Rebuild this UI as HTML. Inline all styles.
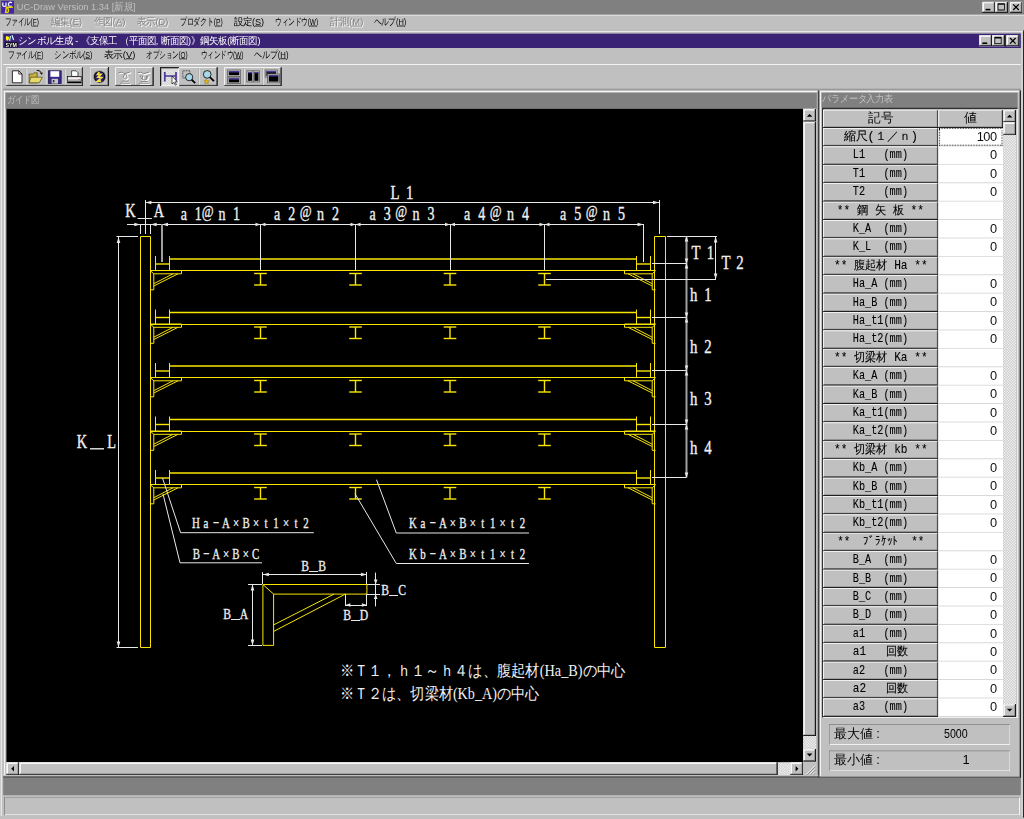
<!DOCTYPE html><html><head><meta charset="utf-8"><style>
*{margin:0;padding:0;box-sizing:border-box}
html,body{width:1024px;height:819px;overflow:hidden;background:#c0c0c0}
#root{position:absolute;left:0;top:0;width:1280px;height:1024px;transform:scale(0.8);transform-origin:0 0;background:#c0c0c0;font-family:"Liberation Sans",sans-serif;font-size:12px;color:#000;overflow:hidden}
.a{position:absolute}
.t{position:absolute;white-space:nowrap;line-height:1;transform-origin:0 0}
.rz{background:#c0c0c0;box-shadow:inset -1px -1px #000,inset 1px 1px #fff,inset -2px -2px #808080}
.rz2{background:#c0c0c0;box-shadow:inset -1px -1px #000,inset 1px 1px #dfdfdf,inset -2px -2px #808080,inset 2px 2px #fff}
.sk{box-shadow:inset 1px 1px #808080,inset -1px -1px #fff}
.sk2{box-shadow:inset 1px 1px #808080,inset -1px -1px #fff,inset 2px 2px #000,inset -2px -2px #dfdfdf}
.dis{color:#808080;text-shadow:1px 1px 0 #fff}
.chk{background-color:#c0c0c0;background-image:linear-gradient(45deg,#fff 25%,transparent 25%,transparent 75%,#fff 75%),linear-gradient(45deg,#fff 25%,transparent 25%,transparent 75%,#fff 75%);background-size:2px 2px;background-position:0 0,1px 1px}
svg{position:absolute;left:0;top:0}
</style></head><body><div id="root"><div class="a " style="left:0px;top:0px;width:1280px;height:17.5px;background:#808080"></div><div class="a " style="left:0px;top:19px;width:1280px;height:1px;background:#e0e0e0"></div><svg width="20" height="18" style="left:0px;top:0px"><rect x="1.5" y="1" width="16" height="16" fill="#4424a8"/><path d="M3.5 3 V6.5 Q3.5 8 5.5 8 Q7.5 8 7.5 6.5 V3" stroke="#e8f4f4" stroke-width="1.6" fill="none"/><path d="M15 3.5 Q13.5 2.5 12 3 Q10 4 10.5 6.5 Q11.5 8.5 15 7.5" stroke="#e8f4f4" stroke-width="1.6" fill="none"/><path d="M7.5 9 H16 M8 9 L7 15.5 H9.5 Q11 15 10.5 12 Q10 10 9 9.5" stroke="#e8d400" stroke-width="1.8" fill="none"/></svg><div class="t fit" style="left:21px;top:3px;color:#c0c0c0;font-size:12px;--w:148;transform:scaleX(0.9673)">UC-Draw Version 1.34 [新規]</div><div class="a rz2" style="left:1228px;top:2px;width:16px;height:14px"><div class="a" style="left:4px;top:9px;width:6px;height:2px;background:#000"></div></div><div class="a rz2" style="left:1244px;top:2px;width:16px;height:14px"><div class="a" style="left:3px;top:2px;width:9px;height:9px;border:1px solid #000;border-top-width:2px"></div></div><div class="a rz2" style="left:1262px;top:2px;width:16px;height:14px"><svg width="16" height="14" style="left:0;top:0"><path d="M4.5 3.5 L11.5 10.5 M11.5 3.5 L4.5 10.5" stroke="#000" stroke-width="1.6"/></svg></div><div class="t fit" style="left:6.4px;top:21px;font-size:12px;--w:42.3;transform:scaleX(0.6714)">ファイル(<u>F</u>)</div><div class="t dis fit" style="left:64px;top:21px;font-size:12px;--w:38.5;transform:scaleX(0.9625)">編集(<u>E</u>)</div><div class="t dis fit" style="left:116.6px;top:21px;font-size:12px;--w:39.8;transform:scaleX(0.9950)">作図(<u>A</u>)</div><div class="t dis fit" style="left:170.5px;top:21px;font-size:12px;--w:39.75;transform:scaleX(0.9695)">表示(<u>D</u>)</div><div class="t fit" style="left:224.75px;top:21px;font-size:12px;--w:53.4;transform:scaleX(0.7026)">プロダクト(<u>P</u>)</div><div class="t fit" style="left:291.9px;top:21px;font-size:12px;--w:38.1;transform:scaleX(0.9525)">設定(<u>S</u>)</div><div class="t fit" style="left:343.75px;top:21px;font-size:12px;--w:53.4;transform:scaleX(0.6759)">ウィンドウ(<u>W</u>)</div><div class="t dis fit" style="left:412.5px;top:21px;font-size:12px;--w:41.1;transform:scaleX(0.9786)">計測(<u>M</u>)</div><div class="t fit" style="left:467.4px;top:21px;font-size:12px;--w:41.1;transform:scaleX(0.7755)">ヘルプ(<u>H</u>)</div><div class="a " style="left:1px;top:38px;width:1px;height:982px;background:#fff"></div><div class="a " style="left:1px;top:39px;width:1279px;height:1px;background:#fff"></div><div class="a " style="left:2px;top:38px;width:1277px;height:1px;background:#b8b8b8"></div><div class="a " style="left:1279px;top:38px;width:1px;height:984px;background:#000"></div><div class="a " style="left:1277px;top:38px;width:1px;height:982px;background:#e8e8e8"></div><div class="a " style="left:4px;top:42px;width:1272px;height:18px;background:#3a2274"></div><svg width="18" height="18" style="left:5px;top:42px"><path d="M3 3 Q1 7 4 9 Q7 8 6 4 Z" fill="#ff0"/><path d="M8 3 L7 9 M10 2 L12 8" stroke="#cff" stroke-width="1.5"/><rect x="1" y="11" width="16" height="6" fill="#000"/><text x="9" y="16.5" font-size="6.5" font-weight="bold" fill="#fff" text-anchor="middle" font-family="Liberation Sans">SYM</text></svg><div class="t fit" style="left:23px;top:45px;color:#fff;font-size:12px;--w:303;transform:scaleX(0.9439)">シンボル生成 - 《支保工 （平面図, 断面図)》鋼矢板(断面図)</div><div class="a rz2" style="left:1224px;top:44px;width:16px;height:14px"><div class="a" style="left:4px;top:9px;width:6px;height:2px;background:#000"></div></div><div class="a rz2" style="left:1240px;top:44px;width:16px;height:14px"><div class="a" style="left:3px;top:2px;width:9px;height:9px;border:1px solid #000;border-top-width:2px"></div></div><div class="a rz2" style="left:1258px;top:44px;width:16px;height:14px"><svg width="16" height="14" style="left:0;top:0"><path d="M4.5 3.5 L11.5 10.5 M11.5 3.5 L4.5 10.5" stroke="#000" stroke-width="1.6"/></svg></div><div class="t fit" style="left:10.25px;top:62px;font-size:12px;--w:44;transform:scaleX(0.6984)">ファイル(<u>F</u>)</div><div class="t fit" style="left:67.75px;top:62px;font-size:12px;--w:47.6;transform:scaleX(0.7438)">シンボル(<u>S</u>)</div><div class="t fit" style="left:130px;top:62px;font-size:12px;--w:39.25;transform:scaleX(0.9812)">表示(<u>V</u>)</div><div class="t fit" style="left:183.1px;top:62px;font-size:12px;--w:51.3;transform:scaleX(0.6662)">オプション(<u>O</u>)</div><div class="t fit" style="left:250.9px;top:62px;font-size:12px;--w:53.1;transform:scaleX(0.6722)">ウィンドウ(<u>W</u>)</div><div class="t fit" style="left:317.9px;top:62px;font-size:12px;--w:42.9;transform:scaleX(0.8094)">ヘルプ(<u>H</u>)</div><div class="a " style="left:4px;top:80px;width:1272px;height:1px;background:#fff"></div><div class="a " style="left:4px;top:111px;width:1272px;height:1px;background:#808080"></div><div class="a rz" style="left:8px;top:84px;width:96px;height:24px"></div><div class="a" style="left:32px;top:86px;width:1px;height:20px;background:#a8a8a8"></div><div class="a" style="left:33px;top:86px;width:1px;height:20px;background:#e8e8e8"></div><div class="a" style="left:56px;top:86px;width:1px;height:20px;background:#a8a8a8"></div><div class="a" style="left:57px;top:86px;width:1px;height:20px;background:#e8e8e8"></div><div class="a" style="left:80px;top:86px;width:1px;height:20px;background:#a8a8a8"></div><div class="a" style="left:81px;top:86px;width:1px;height:20px;background:#e8e8e8"></div><svg width="24" height="24" style="left:8px;top:84px"><path d="M7.5 4.5 H15.5 L19.5 8.5 V19.5 H7.5 Z" fill="#fff" stroke="#000"/><path d="M15.5 4.5 V8.5 H19.5" fill="none" stroke="#000"/></svg><svg width="24" height="24" style="left:32px;top:84px"><path d="M4.5 8.5 H9 L10.5 7 H14.5 V19.5 H4.5 Z" fill="#c8b040" stroke="#404000" stroke-width=".8"/><path d="M6.5 12.5 H21 L17 19.5 H4.5 Z" fill="#e8d870" stroke="#404000" stroke-width=".8"/><path d="M14 4 Q18 3 20 8" stroke="#000" fill="none" stroke-width="1.2"/><path d="M20.5 9.5 L18 7.5 L21.5 6.5 Z" fill="#000"/></svg><svg width="24" height="24" style="left:56px;top:84px"><rect x="4.5" y="4.5" width="16" height="16" fill="#38288a" stroke="#100840" stroke-width=".8"/><rect x="7" y="5" width="11" height="7" fill="#fff"/><rect x="8.5" y="14.5" width="8" height="6" fill="#c8c8c8"/><rect x="10" y="16" width="2" height="3" fill="#303030"/></svg><svg width="24" height="24" style="left:80px;top:84px"><path d="M9.5 4.5 H15 L17.5 7 V11.5 H9.5 Z" fill="#fff" stroke="#000" stroke-width=".8"/><rect x="4.5" y="11.5" width="17" height="6" fill="#c0c0c0" stroke="#000" stroke-width=".8"/><rect x="5" y="13" width="16" height="1.5" fill="#fff"/><rect x="4" y="18.5" width="18" height="1.5" fill="#000"/><circle cx="19" cy="15.5" r=".8" fill="#e04040"/></svg><div class="a rz" style="left:112px;top:84px;width:24px;height:24px"></div><svg width="24" height="24" style="left:112px;top:84px"><circle cx="12.5" cy="12" r="8" fill="#808080"/><circle cx="12.5" cy="12" r="7" fill="#000"/><circle cx="12.5" cy="12" r="6" fill="#2a1e78"/><path d="M12 6 L10 9 L14 9 L10.5 12.5 L15 13 L10 17.5 L14.5 17.5" stroke="#f0e040" stroke-width="2.2" fill="none"/></svg><div class="a rz" style="left:144px;top:84px;width:48px;height:24px"></div><div class="a" style="left:168px;top:86px;width:1px;height:20px;background:#a8a8a8"></div><div class="a" style="left:169px;top:86px;width:1px;height:20px;background:#e8e8e8"></div><svg width="24" height="24" style="left:144px;top:84px"><g transform="translate(1,1)" stroke="#fff" stroke-width="2" fill="none"><path d="M4 7 Q8 5 12 8 L19 6 M12 8 L10 13 L12.5 15 L15 13 L13 8 M8 17.5 H17 M6 20 H19"/></g><g stroke="#808080" stroke-width="1.2" fill="none"><path d="M4 7 Q8 5 12 8 L19 6 M12 8 L10 13 L12.5 15 L15 13 L13 8 M8 17.5 H17 M6 20 H19"/></g></svg><svg width="24" height="24" style="left:168px;top:84px"><g transform="translate(1,1)" stroke="#fff" stroke-width="2" fill="none"><path d="M4 7 Q8 5 12 8 L19 6 M8 10 Q8 16 12.5 16 Q17 16 17 10 M10 11 V15 M15 11 V15 M8 18 H17 M6 20 H19"/></g><g stroke="#808080" stroke-width="1.2" fill="none"><path d="M4 7 Q8 5 12 8 L19 6 M8 10 Q8 16 12.5 16 Q17 16 17 10 M10 11 V15 M15 11 V15 M8 18 H17 M6 20 H19"/></g></svg><div class="a rz" style="left:200px;top:84px;width:72px;height:24px"></div><div class="a" style="left:248px;top:86px;width:1px;height:20px;background:#a8a8a8"></div><div class="a" style="left:249px;top:86px;width:1px;height:20px;background:#e8e8e8"></div><div class="a chk" style="left:200px;top:84px;width:24px;height:24px;box-shadow:inset 1px 1px #000,inset -1px -1px #fff,inset 2px 2px #808080"></div><svg width="24" height="24" style="left:201px;top:84px"><path d="M5 6 V18 M19 6 V18" stroke="#4a3a9a" stroke-width="2.2"/><path d="M5 11 H19" stroke="#4a3a9a" stroke-width="2"/><path d="M14 11 L14 21 L16.2 19 L18.2 22.5 L19.5 21.8 L17.6 18.4 L20.5 18.2 Z" fill="#fff" stroke="#000" stroke-width=".8"/></svg><svg width="24" height="24" style="left:224px;top:84px"><rect x="4.5" y="4.5" width="9" height="9" fill="none" stroke="#000" stroke-dasharray="1 1"/><circle cx="12.5" cy="12.5" r="4.5" fill="#a8d8e8" stroke="#000"/><path d="M15.5 15.5 L20 20" stroke="#000" stroke-width="2.2"/></svg><svg width="24" height="24" style="left:248px;top:84px"><circle cx="11" cy="9" r="4.8" fill="#a8d8e8" stroke="#000"/><path d="M14.3 12.3 L19.5 17.5" stroke="#000" stroke-width="2.2"/><path d="M9.5 15 L11 17 L13.5 17 L11.8 18.5 L12.5 21 L10.2 19.5 L8 21 L8.6 18.5 L7 17 L9 17 Z" fill="#e8c000" stroke="#806000" stroke-width=".5"/></svg><div class="a rz" style="left:280px;top:84px;width:72px;height:24px"></div><div class="a" style="left:304px;top:86px;width:1px;height:20px;background:#a8a8a8"></div><div class="a" style="left:305px;top:86px;width:1px;height:20px;background:#e8e8e8"></div><div class="a" style="left:328px;top:86px;width:1px;height:20px;background:#a8a8a8"></div><div class="a" style="left:329px;top:86px;width:1px;height:20px;background:#e8e8e8"></div><svg width="24" height="24" style="left:280px;top:84px"><rect x="4.5" y="3.5" width="16" height="8" fill="#c0c0c0" stroke="#606060"/><rect x="6" y="5" width="13" height="5" fill="#000"/><rect x="6" y="5" width="13" height="1.5" fill="#5040b0"/><rect x="4.5" y="12.5" width="16" height="8" fill="#c0c0c0" stroke="#606060"/><rect x="6" y="14" width="13" height="5" fill="#000"/><rect x="6" y="14" width="13" height="1.5" fill="#5040b0"/></svg><svg width="24" height="24" style="left:304px;top:84px"><rect x="4.5" y="4.5" width="8" height="14" fill="#c0c0c0" stroke="#606060"/><rect x="6" y="6" width="5" height="11" fill="#000"/><rect x="6" y="6" width="5" height="1.5" fill="#5040b0"/><rect x="12.5" y="4.5" width="8" height="14" fill="#c0c0c0" stroke="#606060"/><rect x="14" y="6" width="5" height="11" fill="#000"/><rect x="14" y="6" width="5" height="1.5" fill="#5040b0"/></svg><svg width="24" height="24" style="left:328px;top:84px"><rect x="3.5" y="3.5" width="15" height="9" fill="#c0c0c0" stroke="#606060"/><rect x="5" y="5" width="12" height="6" fill="#000"/><rect x="5" y="5" width="12" height="1.5" fill="#5040b0"/><rect x="6.5" y="8.5" width="15" height="11" fill="#c0c0c0" stroke="#606060"/><rect x="8" y="10" width="12" height="8" fill="#000"/><rect x="8" y="10" width="12" height="1.5" fill="#5040b0"/></svg><div class="a " style="left:5px;top:114px;width:1017px;height:1px;background:#fff"></div><div class="a " style="left:5px;top:114px;width:1px;height:856px;background:#fff"></div><div class="a " style="left:1022px;top:113px;width:1px;height:858px;background:#808080"></div><div class="a " style="left:1023px;top:113px;width:1px;height:859px;background:#000"></div><div class="a " style="left:7px;top:116px;width:1014px;height:20px;background:#808080"></div><div class="t fit" style="left:9px;top:119px;color:#c0c0c0;font-size:12px;--w:40;transform:scaleX(0.8333)">ガイド図</div><div class="a " style="left:8px;top:136px;width:996px;height:817px;background:#000"></div><div class="a chk" style="left:1004px;top:136px;width:16px;height:817px;"></div><div class="a rz2" style="left:1004px;top:136px;width:16px;height:16px"><svg width="16" height="16"><path d="M4.5 10 L8 6.5 L11.5 10 Z" fill="#000"/></svg></div><div class="a rz2" style="left:1004px;top:152px;width:16px;height:768px;"></div><div class="a rz2" style="left:1004px;top:936px;width:16px;height:16px"><svg width="16" height="16"><path d="M4.5 6 L8 9.5 L11.5 6 Z" fill="#000"/></svg></div><div class="a chk" style="left:8px;top:953px;width:996px;height:16px;"></div><div class="a rz2" style="left:8px;top:953px;width:16px;height:16px"><svg width="16" height="16"><path d="M9.5 4.5 L6 8 L9.5 11.5 Z" fill="#000"/></svg></div><div class="a rz2" style="left:24px;top:953px;width:948px;height:16px;"></div><div class="a rz2" style="left:988px;top:953px;width:16px;height:16px"><svg width="16" height="16"><path d="M6.5 4.5 L10 8 L6.5 11.5 Z" fill="#000"/></svg></div><div class="a " style="left:1004px;top:953px;width:16px;height:16px;background:#c0c0c0"></div><svg width="16" height="16" style="left:1004px;top:953px"><path d="M15 4 L4 15 M15 8 L8 15 M15 12 L12 15" stroke="#fff" stroke-width="1"/><path d="M15.5 5 L5 15.5 M15.5 9 L9 15.5 M15.5 13 L13 15.5" stroke="#808080" stroke-width="1"/></svg><div class="a " style="left:5px;top:969px;width:1018px;height:1px;background:#c0c0c0"></div><div class="a " style="left:4px;top:970px;width:1019px;height:1px;background:#808080"></div><div class="a " style="left:4px;top:971px;width:1272px;height:1px;background:#000"></div><div class="a " style="left:1025px;top:114px;width:250px;height:1px;background:#fff"></div><div class="a " style="left:1025px;top:114px;width:1px;height:856px;background:#fff"></div><div class="a " style="left:1274px;top:113px;width:1px;height:858px;background:#808080"></div><div class="a " style="left:1275px;top:113px;width:1px;height:859px;background:#000"></div><div class="a " style="left:1027px;top:116px;width:245px;height:18px;background:#808080"></div><div class="t fit" style="left:1028px;top:118px;color:#c0c0c0;font-size:12px;--w:88;transform:scaleX(0.9167)">パラメータ入力表</div><div class="a sk2" style="left:1027px;top:134px;width:246px;height:764px;background:#c0c0c0"></div><div class="a rz" style="left:1029px;top:137px;width:144px;height:23px"></div><div class="t " style="left:1029px;top:140px;width:144px;text-align:center;font-size:16px"><span class="fit" style="display:inline-block;--w:31;transform:scaleX(0.9688)">記号</span></div><div class="a rz" style="left:1173px;top:137px;width:81px;height:23px"></div><div class="t " style="left:1173px;top:140px;width:81px;text-align:center;font-size:16px"><span class="fit" style="display:inline-block;--w:16;transform:scaleX(1.0000)">値</span></div><div class="a" style="left:1029px;top:160px;width:144px;height:23px;background:#c0c0c0;box-shadow:inset -1px -1px #000,inset 1px 1px #fff,inset -2px -2px #808080"></div><div class="t " style="left:1029px;top:164px;width:144px;text-align:center;font-size:15px;font-family:Liberation Mono,monospace;color:#000;-webkit-text-stroke:0.12px #000"><span class="fit" style="display:inline-block;transform-origin:50% 0;--w:93;transform:scaleX(1.0000)">縮尺(１／ｎ)</span></div><div class="a" style="left:1173px;top:160px;width:81px;height:23px;background:#fff;border-bottom:1px solid #d0d0d0"></div><div class="t " style="left:1173px;top:163px;width:73px;text-align:right;font-size:16px;color:#101010;letter-spacing:-0.5px">100</div><div class="a" style="left:1029px;top:183px;width:144px;height:23px;background:#c0c0c0;box-shadow:inset -1px -1px #000,inset 1px 1px #fff,inset -2px -2px #808080"></div><div class="t " style="left:1029px;top:187px;width:144px;text-align:center;font-size:15px;font-family:Liberation Mono,monospace;color:#000;-webkit-text-stroke:0.12px #000"><span class="fit" style="display:inline-block;transform-origin:50% 0;--w:69;transform:scaleX(0.8519)">L1&nbsp;&nbsp;&nbsp;(mm)</span></div><div class="a" style="left:1173px;top:183px;width:81px;height:23px;background:#fff;border-bottom:1px solid #d0d0d0"></div><div class="t " style="left:1173px;top:186px;width:73px;text-align:right;font-size:16px;color:#101010;letter-spacing:-0.5px">0</div><div class="a" style="left:1029px;top:206px;width:144px;height:23px;background:#c0c0c0;box-shadow:inset -1px -1px #000,inset 1px 1px #fff,inset -2px -2px #808080"></div><div class="t " style="left:1029px;top:210px;width:144px;text-align:center;font-size:15px;font-family:Liberation Mono,monospace;color:#000;-webkit-text-stroke:0.12px #000"><span class="fit" style="display:inline-block;transform-origin:50% 0;--w:69;transform:scaleX(0.8519)">T1&nbsp;&nbsp;&nbsp;(mm)</span></div><div class="a" style="left:1173px;top:206px;width:81px;height:23px;background:#fff;border-bottom:1px solid #d0d0d0"></div><div class="t " style="left:1173px;top:209px;width:73px;text-align:right;font-size:16px;color:#101010;letter-spacing:-0.5px">0</div><div class="a" style="left:1029px;top:229px;width:144px;height:23px;background:#c0c0c0;box-shadow:inset -1px -1px #000,inset 1px 1px #fff,inset -2px -2px #808080"></div><div class="t " style="left:1029px;top:233px;width:144px;text-align:center;font-size:15px;font-family:Liberation Mono,monospace;color:#000;-webkit-text-stroke:0.12px #000"><span class="fit" style="display:inline-block;transform-origin:50% 0;--w:69;transform:scaleX(0.8519)">T2&nbsp;&nbsp;&nbsp;(mm)</span></div><div class="a" style="left:1173px;top:229px;width:81px;height:23px;background:#fff;border-bottom:1px solid #d0d0d0"></div><div class="t " style="left:1173px;top:232px;width:73px;text-align:right;font-size:16px;color:#101010;letter-spacing:-0.5px">0</div><div class="a" style="left:1029px;top:252px;width:144px;height:23px;background:#c0c0c0;box-shadow:inset -1px -1px #000,inset 1px 1px #fff,inset -2px -2px #808080"></div><div class="t " style="left:1029px;top:256px;width:144px;text-align:center;font-size:15px;font-family:Liberation Mono,monospace;color:#000;-webkit-text-stroke:0.12px #000"><span class="fit" style="display:inline-block;transform-origin:50% 0;--w:109;transform:scaleX(0.9316)">**&nbsp;鋼&nbsp;矢&nbsp;板&nbsp;**</span></div><div class="a" style="left:1173px;top:252px;width:81px;height:23px;background:#fff;border-bottom:1px solid #d0d0d0"></div><div class="a" style="left:1029px;top:275px;width:144px;height:23px;background:#c0c0c0;box-shadow:inset -1px -1px #000,inset 1px 1px #fff,inset -2px -2px #808080"></div><div class="t " style="left:1029px;top:279px;width:144px;text-align:center;font-size:15px;font-family:Liberation Mono,monospace;color:#000;-webkit-text-stroke:0.12px #000"><span class="fit" style="display:inline-block;transform-origin:50% 0;--w:69;transform:scaleX(0.8519)">K_A&nbsp;&nbsp;(mm)</span></div><div class="a" style="left:1173px;top:275px;width:81px;height:23px;background:#fff;border-bottom:1px solid #d0d0d0"></div><div class="t " style="left:1173px;top:278px;width:73px;text-align:right;font-size:16px;color:#101010;letter-spacing:-0.5px">0</div><div class="a" style="left:1029px;top:298px;width:144px;height:23px;background:#c0c0c0;box-shadow:inset -1px -1px #000,inset 1px 1px #fff,inset -2px -2px #808080"></div><div class="t " style="left:1029px;top:302px;width:144px;text-align:center;font-size:15px;font-family:Liberation Mono,monospace;color:#000;-webkit-text-stroke:0.12px #000"><span class="fit" style="display:inline-block;transform-origin:50% 0;--w:69;transform:scaleX(0.8519)">K_L&nbsp;&nbsp;(mm)</span></div><div class="a" style="left:1173px;top:298px;width:81px;height:23px;background:#fff;border-bottom:1px solid #d0d0d0"></div><div class="t " style="left:1173px;top:301px;width:73px;text-align:right;font-size:16px;color:#101010;letter-spacing:-0.5px">0</div><div class="a" style="left:1029px;top:321px;width:144px;height:23px;background:#c0c0c0;box-shadow:inset -1px -1px #000,inset 1px 1px #fff,inset -2px -2px #808080"></div><div class="t " style="left:1029px;top:325px;width:144px;text-align:center;font-size:15px;font-family:Liberation Mono,monospace;color:#000;-webkit-text-stroke:0.12px #000"><span class="fit" style="display:inline-block;transform-origin:50% 0;--w:117;transform:scaleX(0.9286)">**&nbsp;腹起材&nbsp;Ha&nbsp;**</span></div><div class="a" style="left:1173px;top:321px;width:81px;height:23px;background:#fff;border-bottom:1px solid #d0d0d0"></div><div class="a" style="left:1029px;top:344px;width:144px;height:23px;background:#c0c0c0;box-shadow:inset -1px -1px #000,inset 1px 1px #fff,inset -2px -2px #808080"></div><div class="t " style="left:1029px;top:348px;width:144px;text-align:center;font-size:15px;font-family:Liberation Mono,monospace;color:#000;-webkit-text-stroke:0.12px #000"><span class="fit" style="display:inline-block;transform-origin:50% 0;--w:69;transform:scaleX(0.8519)">Ha_A&nbsp;(mm)</span></div><div class="a" style="left:1173px;top:344px;width:81px;height:23px;background:#fff;border-bottom:1px solid #d0d0d0"></div><div class="t " style="left:1173px;top:347px;width:73px;text-align:right;font-size:16px;color:#101010;letter-spacing:-0.5px">0</div><div class="a" style="left:1029px;top:367px;width:144px;height:23px;background:#c0c0c0;box-shadow:inset -1px -1px #000,inset 1px 1px #fff,inset -2px -2px #808080"></div><div class="t " style="left:1029px;top:371px;width:144px;text-align:center;font-size:15px;font-family:Liberation Mono,monospace;color:#000;-webkit-text-stroke:0.12px #000"><span class="fit" style="display:inline-block;transform-origin:50% 0;--w:69;transform:scaleX(0.8519)">Ha_B&nbsp;(mm)</span></div><div class="a" style="left:1173px;top:367px;width:81px;height:23px;background:#fff;border-bottom:1px solid #d0d0d0"></div><div class="t " style="left:1173px;top:370px;width:73px;text-align:right;font-size:16px;color:#101010;letter-spacing:-0.5px">0</div><div class="a" style="left:1029px;top:390px;width:144px;height:23px;background:#c0c0c0;box-shadow:inset -1px -1px #000,inset 1px 1px #fff,inset -2px -2px #808080"></div><div class="t " style="left:1029px;top:394px;width:144px;text-align:center;font-size:15px;font-family:Liberation Mono,monospace;color:#000;-webkit-text-stroke:0.12px #000"><span class="fit" style="display:inline-block;transform-origin:50% 0;--w:69;transform:scaleX(0.8519)">Ha_t1(mm)</span></div><div class="a" style="left:1173px;top:390px;width:81px;height:23px;background:#fff;border-bottom:1px solid #d0d0d0"></div><div class="t " style="left:1173px;top:393px;width:73px;text-align:right;font-size:16px;color:#101010;letter-spacing:-0.5px">0</div><div class="a" style="left:1029px;top:413px;width:144px;height:23px;background:#c0c0c0;box-shadow:inset -1px -1px #000,inset 1px 1px #fff,inset -2px -2px #808080"></div><div class="t " style="left:1029px;top:417px;width:144px;text-align:center;font-size:15px;font-family:Liberation Mono,monospace;color:#000;-webkit-text-stroke:0.12px #000"><span class="fit" style="display:inline-block;transform-origin:50% 0;--w:69;transform:scaleX(0.8519)">Ha_t2(mm)</span></div><div class="a" style="left:1173px;top:413px;width:81px;height:23px;background:#fff;border-bottom:1px solid #d0d0d0"></div><div class="t " style="left:1173px;top:416px;width:73px;text-align:right;font-size:16px;color:#101010;letter-spacing:-0.5px">0</div><div class="a" style="left:1029px;top:436px;width:144px;height:23px;background:#c0c0c0;box-shadow:inset -1px -1px #000,inset 1px 1px #fff,inset -2px -2px #808080"></div><div class="t " style="left:1029px;top:440px;width:144px;text-align:center;font-size:15px;font-family:Liberation Mono,monospace;color:#000;-webkit-text-stroke:0.12px #000"><span class="fit" style="display:inline-block;transform-origin:50% 0;--w:117;transform:scaleX(0.9286)">**&nbsp;切梁材&nbsp;Ka&nbsp;**</span></div><div class="a" style="left:1173px;top:436px;width:81px;height:23px;background:#fff;border-bottom:1px solid #d0d0d0"></div><div class="a" style="left:1029px;top:459px;width:144px;height:23px;background:#c0c0c0;box-shadow:inset -1px -1px #000,inset 1px 1px #fff,inset -2px -2px #808080"></div><div class="t " style="left:1029px;top:463px;width:144px;text-align:center;font-size:15px;font-family:Liberation Mono,monospace;color:#000;-webkit-text-stroke:0.12px #000"><span class="fit" style="display:inline-block;transform-origin:50% 0;--w:69;transform:scaleX(0.8519)">Ka_A&nbsp;(mm)</span></div><div class="a" style="left:1173px;top:459px;width:81px;height:23px;background:#fff;border-bottom:1px solid #d0d0d0"></div><div class="t " style="left:1173px;top:462px;width:73px;text-align:right;font-size:16px;color:#101010;letter-spacing:-0.5px">0</div><div class="a" style="left:1029px;top:482px;width:144px;height:23px;background:#c0c0c0;box-shadow:inset -1px -1px #000,inset 1px 1px #fff,inset -2px -2px #808080"></div><div class="t " style="left:1029px;top:486px;width:144px;text-align:center;font-size:15px;font-family:Liberation Mono,monospace;color:#000;-webkit-text-stroke:0.12px #000"><span class="fit" style="display:inline-block;transform-origin:50% 0;--w:69;transform:scaleX(0.8519)">Ka_B&nbsp;(mm)</span></div><div class="a" style="left:1173px;top:482px;width:81px;height:23px;background:#fff;border-bottom:1px solid #d0d0d0"></div><div class="t " style="left:1173px;top:485px;width:73px;text-align:right;font-size:16px;color:#101010;letter-spacing:-0.5px">0</div><div class="a" style="left:1029px;top:505px;width:144px;height:23px;background:#c0c0c0;box-shadow:inset -1px -1px #000,inset 1px 1px #fff,inset -2px -2px #808080"></div><div class="t " style="left:1029px;top:509px;width:144px;text-align:center;font-size:15px;font-family:Liberation Mono,monospace;color:#000;-webkit-text-stroke:0.12px #000"><span class="fit" style="display:inline-block;transform-origin:50% 0;--w:69;transform:scaleX(0.8519)">Ka_t1(mm)</span></div><div class="a" style="left:1173px;top:505px;width:81px;height:23px;background:#fff;border-bottom:1px solid #d0d0d0"></div><div class="t " style="left:1173px;top:508px;width:73px;text-align:right;font-size:16px;color:#101010;letter-spacing:-0.5px">0</div><div class="a" style="left:1029px;top:528px;width:144px;height:23px;background:#c0c0c0;box-shadow:inset -1px -1px #000,inset 1px 1px #fff,inset -2px -2px #808080"></div><div class="t " style="left:1029px;top:532px;width:144px;text-align:center;font-size:15px;font-family:Liberation Mono,monospace;color:#000;-webkit-text-stroke:0.12px #000"><span class="fit" style="display:inline-block;transform-origin:50% 0;--w:69;transform:scaleX(0.8519)">Ka_t2(mm)</span></div><div class="a" style="left:1173px;top:528px;width:81px;height:23px;background:#fff;border-bottom:1px solid #d0d0d0"></div><div class="t " style="left:1173px;top:531px;width:73px;text-align:right;font-size:16px;color:#101010;letter-spacing:-0.5px">0</div><div class="a" style="left:1029px;top:551px;width:144px;height:23px;background:#c0c0c0;box-shadow:inset -1px -1px #000,inset 1px 1px #fff,inset -2px -2px #808080"></div><div class="t " style="left:1029px;top:555px;width:144px;text-align:center;font-size:15px;font-family:Liberation Mono,monospace;color:#000;-webkit-text-stroke:0.12px #000"><span class="fit" style="display:inline-block;transform-origin:50% 0;--w:117;transform:scaleX(0.9286)">**&nbsp;切梁材&nbsp;kb&nbsp;**</span></div><div class="a" style="left:1173px;top:551px;width:81px;height:23px;background:#fff;border-bottom:1px solid #d0d0d0"></div><div class="a" style="left:1029px;top:574px;width:144px;height:23px;background:#c0c0c0;box-shadow:inset -1px -1px #000,inset 1px 1px #fff,inset -2px -2px #808080"></div><div class="t " style="left:1029px;top:578px;width:144px;text-align:center;font-size:15px;font-family:Liberation Mono,monospace;color:#000;-webkit-text-stroke:0.12px #000"><span class="fit" style="display:inline-block;transform-origin:50% 0;--w:69;transform:scaleX(0.8519)">Kb_A&nbsp;(mm)</span></div><div class="a" style="left:1173px;top:574px;width:81px;height:23px;background:#fff;border-bottom:1px solid #d0d0d0"></div><div class="t " style="left:1173px;top:577px;width:73px;text-align:right;font-size:16px;color:#101010;letter-spacing:-0.5px">0</div><div class="a" style="left:1029px;top:597px;width:144px;height:23px;background:#c0c0c0;box-shadow:inset -1px -1px #000,inset 1px 1px #fff,inset -2px -2px #808080"></div><div class="t " style="left:1029px;top:601px;width:144px;text-align:center;font-size:15px;font-family:Liberation Mono,monospace;color:#000;-webkit-text-stroke:0.12px #000"><span class="fit" style="display:inline-block;transform-origin:50% 0;--w:69;transform:scaleX(0.8519)">Kb_B&nbsp;(mm)</span></div><div class="a" style="left:1173px;top:597px;width:81px;height:23px;background:#fff;border-bottom:1px solid #d0d0d0"></div><div class="t " style="left:1173px;top:600px;width:73px;text-align:right;font-size:16px;color:#101010;letter-spacing:-0.5px">0</div><div class="a" style="left:1029px;top:620px;width:144px;height:23px;background:#c0c0c0;box-shadow:inset -1px -1px #000,inset 1px 1px #fff,inset -2px -2px #808080"></div><div class="t " style="left:1029px;top:624px;width:144px;text-align:center;font-size:15px;font-family:Liberation Mono,monospace;color:#000;-webkit-text-stroke:0.12px #000"><span class="fit" style="display:inline-block;transform-origin:50% 0;--w:69;transform:scaleX(0.8519)">Kb_t1(mm)</span></div><div class="a" style="left:1173px;top:620px;width:81px;height:23px;background:#fff;border-bottom:1px solid #d0d0d0"></div><div class="t " style="left:1173px;top:623px;width:73px;text-align:right;font-size:16px;color:#101010;letter-spacing:-0.5px">0</div><div class="a" style="left:1029px;top:643px;width:144px;height:23px;background:#c0c0c0;box-shadow:inset -1px -1px #000,inset 1px 1px #fff,inset -2px -2px #808080"></div><div class="t " style="left:1029px;top:647px;width:144px;text-align:center;font-size:15px;font-family:Liberation Mono,monospace;color:#000;-webkit-text-stroke:0.12px #000"><span class="fit" style="display:inline-block;transform-origin:50% 0;--w:69;transform:scaleX(0.8519)">Kb_t2(mm)</span></div><div class="a" style="left:1173px;top:643px;width:81px;height:23px;background:#fff;border-bottom:1px solid #d0d0d0"></div><div class="t " style="left:1173px;top:646px;width:73px;text-align:right;font-size:16px;color:#101010;letter-spacing:-0.5px">0</div><div class="a" style="left:1029px;top:666px;width:144px;height:23px;background:#c0c0c0;box-shadow:inset -1px -1px #000,inset 1px 1px #fff,inset -2px -2px #808080"></div><div class="t " style="left:1029px;top:670px;width:144px;text-align:center;font-size:15px;font-family:Liberation Mono,monospace;color:#000;-webkit-text-stroke:0.12px #000"><span class="fit" style="display:inline-block;transform-origin:50% 0;--w:109;transform:scaleX(0.9083)">**&nbsp;&nbsp;ﾌﾞﾗｹｯﾄ&nbsp;&nbsp;**</span></div><div class="a" style="left:1173px;top:666px;width:81px;height:23px;background:#fff;border-bottom:1px solid #d0d0d0"></div><div class="a" style="left:1029px;top:689px;width:144px;height:23px;background:#c0c0c0;box-shadow:inset -1px -1px #000,inset 1px 1px #fff,inset -2px -2px #808080"></div><div class="t " style="left:1029px;top:693px;width:144px;text-align:center;font-size:15px;font-family:Liberation Mono,monospace;color:#000;-webkit-text-stroke:0.12px #000"><span class="fit" style="display:inline-block;transform-origin:50% 0;--w:69;transform:scaleX(0.8519)">B_A&nbsp;&nbsp;(mm)</span></div><div class="a" style="left:1173px;top:689px;width:81px;height:23px;background:#fff;border-bottom:1px solid #d0d0d0"></div><div class="t " style="left:1173px;top:692px;width:73px;text-align:right;font-size:16px;color:#101010;letter-spacing:-0.5px">0</div><div class="a" style="left:1029px;top:712px;width:144px;height:23px;background:#c0c0c0;box-shadow:inset -1px -1px #000,inset 1px 1px #fff,inset -2px -2px #808080"></div><div class="t " style="left:1029px;top:716px;width:144px;text-align:center;font-size:15px;font-family:Liberation Mono,monospace;color:#000;-webkit-text-stroke:0.12px #000"><span class="fit" style="display:inline-block;transform-origin:50% 0;--w:69;transform:scaleX(0.8519)">B_B&nbsp;&nbsp;(mm)</span></div><div class="a" style="left:1173px;top:712px;width:81px;height:23px;background:#fff;border-bottom:1px solid #d0d0d0"></div><div class="t " style="left:1173px;top:715px;width:73px;text-align:right;font-size:16px;color:#101010;letter-spacing:-0.5px">0</div><div class="a" style="left:1029px;top:735px;width:144px;height:23px;background:#c0c0c0;box-shadow:inset -1px -1px #000,inset 1px 1px #fff,inset -2px -2px #808080"></div><div class="t " style="left:1029px;top:739px;width:144px;text-align:center;font-size:15px;font-family:Liberation Mono,monospace;color:#000;-webkit-text-stroke:0.12px #000"><span class="fit" style="display:inline-block;transform-origin:50% 0;--w:69;transform:scaleX(0.8519)">B_C&nbsp;&nbsp;(mm)</span></div><div class="a" style="left:1173px;top:735px;width:81px;height:23px;background:#fff;border-bottom:1px solid #d0d0d0"></div><div class="t " style="left:1173px;top:738px;width:73px;text-align:right;font-size:16px;color:#101010;letter-spacing:-0.5px">0</div><div class="a" style="left:1029px;top:758px;width:144px;height:23px;background:#c0c0c0;box-shadow:inset -1px -1px #000,inset 1px 1px #fff,inset -2px -2px #808080"></div><div class="t " style="left:1029px;top:762px;width:144px;text-align:center;font-size:15px;font-family:Liberation Mono,monospace;color:#000;-webkit-text-stroke:0.12px #000"><span class="fit" style="display:inline-block;transform-origin:50% 0;--w:69;transform:scaleX(0.8519)">B_D&nbsp;&nbsp;(mm)</span></div><div class="a" style="left:1173px;top:758px;width:81px;height:23px;background:#fff;border-bottom:1px solid #d0d0d0"></div><div class="t " style="left:1173px;top:761px;width:73px;text-align:right;font-size:16px;color:#101010;letter-spacing:-0.5px">0</div><div class="a" style="left:1029px;top:781px;width:144px;height:23px;background:#c0c0c0;box-shadow:inset -1px -1px #000,inset 1px 1px #fff,inset -2px -2px #808080"></div><div class="t " style="left:1029px;top:785px;width:144px;text-align:center;font-size:15px;font-family:Liberation Mono,monospace;color:#000;-webkit-text-stroke:0.12px #000"><span class="fit" style="display:inline-block;transform-origin:50% 0;--w:69;transform:scaleX(0.8519)">a1&nbsp;&nbsp;&nbsp;(mm)</span></div><div class="a" style="left:1173px;top:781px;width:81px;height:23px;background:#fff;border-bottom:1px solid #d0d0d0"></div><div class="t " style="left:1173px;top:784px;width:73px;text-align:right;font-size:16px;color:#101010;letter-spacing:-0.5px">0</div><div class="a" style="left:1029px;top:804px;width:144px;height:23px;background:#c0c0c0;box-shadow:inset -1px -1px #000,inset 1px 1px #fff,inset -2px -2px #808080"></div><div class="t " style="left:1029px;top:808px;width:144px;text-align:center;font-size:15px;font-family:Liberation Mono,monospace;color:#000;-webkit-text-stroke:0.12px #000"><span class="fit" style="display:inline-block;transform-origin:50% 0;--w:69;transform:scaleX(0.9200)">a1&nbsp;&nbsp;&nbsp;回数</span></div><div class="a" style="left:1173px;top:804px;width:81px;height:23px;background:#fff;border-bottom:1px solid #d0d0d0"></div><div class="t " style="left:1173px;top:807px;width:73px;text-align:right;font-size:16px;color:#101010;letter-spacing:-0.5px">0</div><div class="a" style="left:1029px;top:827px;width:144px;height:23px;background:#c0c0c0;box-shadow:inset -1px -1px #000,inset 1px 1px #fff,inset -2px -2px #808080"></div><div class="t " style="left:1029px;top:831px;width:144px;text-align:center;font-size:15px;font-family:Liberation Mono,monospace;color:#000;-webkit-text-stroke:0.12px #000"><span class="fit" style="display:inline-block;transform-origin:50% 0;--w:69;transform:scaleX(0.8519)">a2&nbsp;&nbsp;&nbsp;(mm)</span></div><div class="a" style="left:1173px;top:827px;width:81px;height:23px;background:#fff;border-bottom:1px solid #d0d0d0"></div><div class="t " style="left:1173px;top:830px;width:73px;text-align:right;font-size:16px;color:#101010;letter-spacing:-0.5px">0</div><div class="a" style="left:1029px;top:850px;width:144px;height:23px;background:#c0c0c0;box-shadow:inset -1px -1px #000,inset 1px 1px #fff,inset -2px -2px #808080"></div><div class="t " style="left:1029px;top:854px;width:144px;text-align:center;font-size:15px;font-family:Liberation Mono,monospace;color:#000;-webkit-text-stroke:0.12px #000"><span class="fit" style="display:inline-block;transform-origin:50% 0;--w:69;transform:scaleX(0.9200)">a2&nbsp;&nbsp;&nbsp;回数</span></div><div class="a" style="left:1173px;top:850px;width:81px;height:23px;background:#fff;border-bottom:1px solid #d0d0d0"></div><div class="t " style="left:1173px;top:853px;width:73px;text-align:right;font-size:16px;color:#101010;letter-spacing:-0.5px">0</div><div class="a" style="left:1029px;top:873px;width:144px;height:23px;background:#c0c0c0;box-shadow:inset -1px -1px #000,inset 1px 1px #fff,inset -2px -2px #808080"></div><div class="t " style="left:1029px;top:877px;width:144px;text-align:center;font-size:15px;font-family:Liberation Mono,monospace;color:#000;-webkit-text-stroke:0.12px #000"><span class="fit" style="display:inline-block;transform-origin:50% 0;--w:69;transform:scaleX(0.8519)">a3&nbsp;&nbsp;&nbsp;(mm)</span></div><div class="a" style="left:1173px;top:873px;width:81px;height:23px;background:#fff;border-bottom:1px solid #d0d0d0"></div><div class="t " style="left:1173px;top:876px;width:73px;text-align:right;font-size:16px;color:#101010;letter-spacing:-0.5px">0</div><div class="a" style="left:1174px;top:160px;width:79px;height:22px;border:1px dotted #000"></div><div class="a chk" style="left:1254px;top:137px;width:16px;height:759px;"></div><div class="a rz2" style="left:1254px;top:137px;width:16px;height:16px"><svg width="16" height="16"><path d="M4.5 10 L8 6.5 L11.5 10 Z" fill="#000"/></svg></div><div class="a rz2" style="left:1254px;top:153px;width:16px;height:16px;"></div><div class="a rz2" style="left:1254px;top:880px;width:16px;height:16px"><svg width="16" height="16"><path d="M4.5 6 L8 9.5 L11.5 6 Z" fill="#000"/></svg></div><div class="a sk" style="left:1036px;top:905px;width:227px;height:26px;"></div><div class="t fit" style="left:1043px;top:909px;font-size:16px;--w:57;transform:scaleX(1.0000)">最大値 :</div><div class="t fit" style="left:1180px;top:909px;font-size:16px;--w:30;transform:scaleX(0.8333)">5000</div><div class="a sk" style="left:1036px;top:938px;width:227px;height:26px;"></div><div class="t fit" style="left:1043px;top:942px;font-size:16px;--w:57;transform:scaleX(1.0000)">最小値 :</div><div class="t " style="left:1203px;top:942px;font-size:16px">1</div><div class="a " style="left:4px;top:972px;width:1272px;height:22px;background:#808080"></div><div class="a sk" style="left:5px;top:996px;width:1270px;height:23px;"></div></div><svg width="1024" height="819" id="dw"><g font-family="Liberation Serif" shape-rendering="auto"><polygon points="140.5,236.5 150.5,236.5 150.5,647.5 140.5,647.5" fill="none" stroke="#f8e600" stroke-width="1"/><polygon points="654.5,236.5 665.5,236.5 665.5,647.5 654.5,647.5" fill="none" stroke="#f8e600" stroke-width="1"/><line x1="169" y1="259" x2="636.5" y2="259" stroke="#f8e600" stroke-width="1.6"/><line x1="150.5" y1="270.5" x2="654.5" y2="270.5" stroke="#f8e600" stroke-width="1"/><line x1="254.2" y1="273.5" x2="266.8" y2="273.5" stroke="#f8e600" stroke-width="1.4"/><line x1="254.2" y1="285.0" x2="266.8" y2="285.0" stroke="#f8e600" stroke-width="1.4"/><line x1="260.5" y1="273.5" x2="260.5" y2="285.0" stroke="#f8e600" stroke-width="1.4"/><line x1="349.2" y1="273.5" x2="361.8" y2="273.5" stroke="#f8e600" stroke-width="1.4"/><line x1="349.2" y1="285.0" x2="361.8" y2="285.0" stroke="#f8e600" stroke-width="1.4"/><line x1="355.5" y1="273.5" x2="355.5" y2="285.0" stroke="#f8e600" stroke-width="1.4"/><line x1="443.7" y1="273.5" x2="456.3" y2="273.5" stroke="#f8e600" stroke-width="1.4"/><line x1="443.7" y1="285.0" x2="456.3" y2="285.0" stroke="#f8e600" stroke-width="1.4"/><line x1="450" y1="273.5" x2="450" y2="285.0" stroke="#f8e600" stroke-width="1.4"/><line x1="538.2" y1="273.5" x2="550.8" y2="273.5" stroke="#f8e600" stroke-width="1.4"/><line x1="538.2" y1="285.0" x2="550.8" y2="285.0" stroke="#f8e600" stroke-width="1.4"/><line x1="544.5" y1="273.5" x2="544.5" y2="285.0" stroke="#f8e600" stroke-width="1.4"/><g ><line x1="155.5" y1="256" x2="155.5" y2="270.5" stroke="#f8e600" stroke-width="1"/><line x1="169.5" y1="256" x2="169.5" y2="270.5" stroke="#f8e600" stroke-width="1"/><line x1="155" y1="264" x2="169" y2="264" stroke="#f8e600" stroke-width="1.4"/><polyline points="150.5,270.5 181.5,270.5 181.5,273.8 153.5,273.8" fill="none" stroke="#f8e600" stroke-width="1"/><polyline points="153.8,273.8 153.8,289.8 150.5,289.8" fill="none" stroke="#f8e600" stroke-width="1"/><line x1="173" y1="273.8" x2="153.8" y2="283.7" stroke="#f8e600" stroke-width="1"/><line x1="178" y1="273.8" x2="153.8" y2="286.0" stroke="#f8e600" stroke-width="1"/><line x1="150.5" y1="270.8" x2="153.8" y2="273.8" stroke="#f8e600" stroke-width="1"/></g><g transform="translate(806,0) scale(-1,1)"><line x1="155.5" y1="256" x2="155.5" y2="270.5" stroke="#f8e600" stroke-width="1"/><line x1="169.5" y1="256" x2="169.5" y2="270.5" stroke="#f8e600" stroke-width="1"/><line x1="155" y1="264" x2="169" y2="264" stroke="#f8e600" stroke-width="1.4"/><polyline points="150.5,270.5 181.5,270.5 181.5,273.8 153.5,273.8" fill="none" stroke="#f8e600" stroke-width="1"/><polyline points="153.8,273.8 153.8,289.8 150.5,289.8" fill="none" stroke="#f8e600" stroke-width="1"/><line x1="173" y1="273.8" x2="153.8" y2="283.7" stroke="#f8e600" stroke-width="1"/><line x1="178" y1="273.8" x2="153.8" y2="286.0" stroke="#f8e600" stroke-width="1"/><line x1="150.5" y1="270.8" x2="153.8" y2="273.8" stroke="#f8e600" stroke-width="1"/></g><line x1="169" y1="312.5" x2="636.5" y2="312.5" stroke="#f8e600" stroke-width="1.6"/><line x1="150.5" y1="324.5" x2="654.5" y2="324.5" stroke="#f8e600" stroke-width="1"/><line x1="254.2" y1="327.0" x2="266.8" y2="327.0" stroke="#f8e600" stroke-width="1.4"/><line x1="254.2" y1="338.5" x2="266.8" y2="338.5" stroke="#f8e600" stroke-width="1.4"/><line x1="260.5" y1="327.0" x2="260.5" y2="338.5" stroke="#f8e600" stroke-width="1.4"/><line x1="349.2" y1="327.0" x2="361.8" y2="327.0" stroke="#f8e600" stroke-width="1.4"/><line x1="349.2" y1="338.5" x2="361.8" y2="338.5" stroke="#f8e600" stroke-width="1.4"/><line x1="355.5" y1="327.0" x2="355.5" y2="338.5" stroke="#f8e600" stroke-width="1.4"/><line x1="443.7" y1="327.0" x2="456.3" y2="327.0" stroke="#f8e600" stroke-width="1.4"/><line x1="443.7" y1="338.5" x2="456.3" y2="338.5" stroke="#f8e600" stroke-width="1.4"/><line x1="450" y1="327.0" x2="450" y2="338.5" stroke="#f8e600" stroke-width="1.4"/><line x1="538.2" y1="327.0" x2="550.8" y2="327.0" stroke="#f8e600" stroke-width="1.4"/><line x1="538.2" y1="338.5" x2="550.8" y2="338.5" stroke="#f8e600" stroke-width="1.4"/><line x1="544.5" y1="327.0" x2="544.5" y2="338.5" stroke="#f8e600" stroke-width="1.4"/><g ><line x1="155.5" y1="309.5" x2="155.5" y2="324.0" stroke="#f8e600" stroke-width="1"/><line x1="169.5" y1="309.5" x2="169.5" y2="324.0" stroke="#f8e600" stroke-width="1"/><line x1="155" y1="317.5" x2="169" y2="317.5" stroke="#f8e600" stroke-width="1.4"/><polyline points="150.5,324.0 181.5,324.0 181.5,327.3 153.5,327.3" fill="none" stroke="#f8e600" stroke-width="1"/><polyline points="153.8,327.3 153.8,343.3 150.5,343.3" fill="none" stroke="#f8e600" stroke-width="1"/><line x1="173" y1="327.3" x2="153.8" y2="337.2" stroke="#f8e600" stroke-width="1"/><line x1="178" y1="327.3" x2="153.8" y2="339.5" stroke="#f8e600" stroke-width="1"/><line x1="150.5" y1="324.3" x2="153.8" y2="327.3" stroke="#f8e600" stroke-width="1"/></g><g transform="translate(806,0) scale(-1,1)"><line x1="155.5" y1="309.5" x2="155.5" y2="324.0" stroke="#f8e600" stroke-width="1"/><line x1="169.5" y1="309.5" x2="169.5" y2="324.0" stroke="#f8e600" stroke-width="1"/><line x1="155" y1="317.5" x2="169" y2="317.5" stroke="#f8e600" stroke-width="1.4"/><polyline points="150.5,324.0 181.5,324.0 181.5,327.3 153.5,327.3" fill="none" stroke="#f8e600" stroke-width="1"/><polyline points="153.8,327.3 153.8,343.3 150.5,343.3" fill="none" stroke="#f8e600" stroke-width="1"/><line x1="173" y1="327.3" x2="153.8" y2="337.2" stroke="#f8e600" stroke-width="1"/><line x1="178" y1="327.3" x2="153.8" y2="339.5" stroke="#f8e600" stroke-width="1"/><line x1="150.5" y1="324.3" x2="153.8" y2="327.3" stroke="#f8e600" stroke-width="1"/></g><line x1="169" y1="366" x2="636.5" y2="366" stroke="#f8e600" stroke-width="1.6"/><line x1="150.5" y1="377.5" x2="654.5" y2="377.5" stroke="#f8e600" stroke-width="1"/><line x1="254.2" y1="380.5" x2="266.8" y2="380.5" stroke="#f8e600" stroke-width="1.4"/><line x1="254.2" y1="392.0" x2="266.8" y2="392.0" stroke="#f8e600" stroke-width="1.4"/><line x1="260.5" y1="380.5" x2="260.5" y2="392.0" stroke="#f8e600" stroke-width="1.4"/><line x1="349.2" y1="380.5" x2="361.8" y2="380.5" stroke="#f8e600" stroke-width="1.4"/><line x1="349.2" y1="392.0" x2="361.8" y2="392.0" stroke="#f8e600" stroke-width="1.4"/><line x1="355.5" y1="380.5" x2="355.5" y2="392.0" stroke="#f8e600" stroke-width="1.4"/><line x1="443.7" y1="380.5" x2="456.3" y2="380.5" stroke="#f8e600" stroke-width="1.4"/><line x1="443.7" y1="392.0" x2="456.3" y2="392.0" stroke="#f8e600" stroke-width="1.4"/><line x1="450" y1="380.5" x2="450" y2="392.0" stroke="#f8e600" stroke-width="1.4"/><line x1="538.2" y1="380.5" x2="550.8" y2="380.5" stroke="#f8e600" stroke-width="1.4"/><line x1="538.2" y1="392.0" x2="550.8" y2="392.0" stroke="#f8e600" stroke-width="1.4"/><line x1="544.5" y1="380.5" x2="544.5" y2="392.0" stroke="#f8e600" stroke-width="1.4"/><g ><line x1="155.5" y1="363" x2="155.5" y2="377.5" stroke="#f8e600" stroke-width="1"/><line x1="169.5" y1="363" x2="169.5" y2="377.5" stroke="#f8e600" stroke-width="1"/><line x1="155" y1="371" x2="169" y2="371" stroke="#f8e600" stroke-width="1.4"/><polyline points="150.5,377.5 181.5,377.5 181.5,380.8 153.5,380.8" fill="none" stroke="#f8e600" stroke-width="1"/><polyline points="153.8,380.8 153.8,396.8 150.5,396.8" fill="none" stroke="#f8e600" stroke-width="1"/><line x1="173" y1="380.8" x2="153.8" y2="390.7" stroke="#f8e600" stroke-width="1"/><line x1="178" y1="380.8" x2="153.8" y2="393.0" stroke="#f8e600" stroke-width="1"/><line x1="150.5" y1="377.8" x2="153.8" y2="380.8" stroke="#f8e600" stroke-width="1"/></g><g transform="translate(806,0) scale(-1,1)"><line x1="155.5" y1="363" x2="155.5" y2="377.5" stroke="#f8e600" stroke-width="1"/><line x1="169.5" y1="363" x2="169.5" y2="377.5" stroke="#f8e600" stroke-width="1"/><line x1="155" y1="371" x2="169" y2="371" stroke="#f8e600" stroke-width="1.4"/><polyline points="150.5,377.5 181.5,377.5 181.5,380.8 153.5,380.8" fill="none" stroke="#f8e600" stroke-width="1"/><polyline points="153.8,380.8 153.8,396.8 150.5,396.8" fill="none" stroke="#f8e600" stroke-width="1"/><line x1="173" y1="380.8" x2="153.8" y2="390.7" stroke="#f8e600" stroke-width="1"/><line x1="178" y1="380.8" x2="153.8" y2="393.0" stroke="#f8e600" stroke-width="1"/><line x1="150.5" y1="377.8" x2="153.8" y2="380.8" stroke="#f8e600" stroke-width="1"/></g><line x1="169" y1="419.5" x2="636.5" y2="419.5" stroke="#f8e600" stroke-width="1.6"/><line x1="150.5" y1="431.5" x2="654.5" y2="431.5" stroke="#f8e600" stroke-width="1"/><line x1="254.2" y1="434.0" x2="266.8" y2="434.0" stroke="#f8e600" stroke-width="1.4"/><line x1="254.2" y1="445.5" x2="266.8" y2="445.5" stroke="#f8e600" stroke-width="1.4"/><line x1="260.5" y1="434.0" x2="260.5" y2="445.5" stroke="#f8e600" stroke-width="1.4"/><line x1="349.2" y1="434.0" x2="361.8" y2="434.0" stroke="#f8e600" stroke-width="1.4"/><line x1="349.2" y1="445.5" x2="361.8" y2="445.5" stroke="#f8e600" stroke-width="1.4"/><line x1="355.5" y1="434.0" x2="355.5" y2="445.5" stroke="#f8e600" stroke-width="1.4"/><line x1="443.7" y1="434.0" x2="456.3" y2="434.0" stroke="#f8e600" stroke-width="1.4"/><line x1="443.7" y1="445.5" x2="456.3" y2="445.5" stroke="#f8e600" stroke-width="1.4"/><line x1="450" y1="434.0" x2="450" y2="445.5" stroke="#f8e600" stroke-width="1.4"/><line x1="538.2" y1="434.0" x2="550.8" y2="434.0" stroke="#f8e600" stroke-width="1.4"/><line x1="538.2" y1="445.5" x2="550.8" y2="445.5" stroke="#f8e600" stroke-width="1.4"/><line x1="544.5" y1="434.0" x2="544.5" y2="445.5" stroke="#f8e600" stroke-width="1.4"/><g ><line x1="155.5" y1="416.5" x2="155.5" y2="431.0" stroke="#f8e600" stroke-width="1"/><line x1="169.5" y1="416.5" x2="169.5" y2="431.0" stroke="#f8e600" stroke-width="1"/><line x1="155" y1="424.5" x2="169" y2="424.5" stroke="#f8e600" stroke-width="1.4"/><polyline points="150.5,431.0 181.5,431.0 181.5,434.3 153.5,434.3" fill="none" stroke="#f8e600" stroke-width="1"/><polyline points="153.8,434.3 153.8,450.3 150.5,450.3" fill="none" stroke="#f8e600" stroke-width="1"/><line x1="173" y1="434.3" x2="153.8" y2="444.2" stroke="#f8e600" stroke-width="1"/><line x1="178" y1="434.3" x2="153.8" y2="446.5" stroke="#f8e600" stroke-width="1"/><line x1="150.5" y1="431.3" x2="153.8" y2="434.3" stroke="#f8e600" stroke-width="1"/></g><g transform="translate(806,0) scale(-1,1)"><line x1="155.5" y1="416.5" x2="155.5" y2="431.0" stroke="#f8e600" stroke-width="1"/><line x1="169.5" y1="416.5" x2="169.5" y2="431.0" stroke="#f8e600" stroke-width="1"/><line x1="155" y1="424.5" x2="169" y2="424.5" stroke="#f8e600" stroke-width="1.4"/><polyline points="150.5,431.0 181.5,431.0 181.5,434.3 153.5,434.3" fill="none" stroke="#f8e600" stroke-width="1"/><polyline points="153.8,434.3 153.8,450.3 150.5,450.3" fill="none" stroke="#f8e600" stroke-width="1"/><line x1="173" y1="434.3" x2="153.8" y2="444.2" stroke="#f8e600" stroke-width="1"/><line x1="178" y1="434.3" x2="153.8" y2="446.5" stroke="#f8e600" stroke-width="1"/><line x1="150.5" y1="431.3" x2="153.8" y2="434.3" stroke="#f8e600" stroke-width="1"/></g><line x1="169" y1="473" x2="636.5" y2="473" stroke="#f8e600" stroke-width="1.6"/><line x1="150.5" y1="484.5" x2="654.5" y2="484.5" stroke="#f8e600" stroke-width="1"/><line x1="254.2" y1="487.5" x2="266.8" y2="487.5" stroke="#f8e600" stroke-width="1.4"/><line x1="254.2" y1="499.0" x2="266.8" y2="499.0" stroke="#f8e600" stroke-width="1.4"/><line x1="260.5" y1="487.5" x2="260.5" y2="499.0" stroke="#f8e600" stroke-width="1.4"/><line x1="349.2" y1="487.5" x2="361.8" y2="487.5" stroke="#f8e600" stroke-width="1.4"/><line x1="349.2" y1="499.0" x2="361.8" y2="499.0" stroke="#f8e600" stroke-width="1.4"/><line x1="355.5" y1="487.5" x2="355.5" y2="499.0" stroke="#f8e600" stroke-width="1.4"/><line x1="443.7" y1="487.5" x2="456.3" y2="487.5" stroke="#f8e600" stroke-width="1.4"/><line x1="443.7" y1="499.0" x2="456.3" y2="499.0" stroke="#f8e600" stroke-width="1.4"/><line x1="450" y1="487.5" x2="450" y2="499.0" stroke="#f8e600" stroke-width="1.4"/><line x1="538.2" y1="487.5" x2="550.8" y2="487.5" stroke="#f8e600" stroke-width="1.4"/><line x1="538.2" y1="499.0" x2="550.8" y2="499.0" stroke="#f8e600" stroke-width="1.4"/><line x1="544.5" y1="487.5" x2="544.5" y2="499.0" stroke="#f8e600" stroke-width="1.4"/><g ><line x1="155.5" y1="470" x2="155.5" y2="484.5" stroke="#f8e600" stroke-width="1"/><line x1="169.5" y1="470" x2="169.5" y2="484.5" stroke="#f8e600" stroke-width="1"/><line x1="155" y1="478" x2="169" y2="478" stroke="#f8e600" stroke-width="1.4"/><polyline points="150.5,484.5 181.5,484.5 181.5,487.8 153.5,487.8" fill="none" stroke="#f8e600" stroke-width="1"/><polyline points="153.8,487.8 153.8,503.8 150.5,503.8" fill="none" stroke="#f8e600" stroke-width="1"/><line x1="173" y1="487.8" x2="153.8" y2="497.7" stroke="#f8e600" stroke-width="1"/><line x1="178" y1="487.8" x2="153.8" y2="500.0" stroke="#f8e600" stroke-width="1"/><line x1="150.5" y1="484.8" x2="153.8" y2="487.8" stroke="#f8e600" stroke-width="1"/></g><g transform="translate(806,0) scale(-1,1)"><line x1="155.5" y1="470" x2="155.5" y2="484.5" stroke="#f8e600" stroke-width="1"/><line x1="169.5" y1="470" x2="169.5" y2="484.5" stroke="#f8e600" stroke-width="1"/><line x1="155" y1="478" x2="169" y2="478" stroke="#f8e600" stroke-width="1.4"/><polyline points="150.5,484.5 181.5,484.5 181.5,487.8 153.5,487.8" fill="none" stroke="#f8e600" stroke-width="1"/><polyline points="153.8,487.8 153.8,503.8 150.5,503.8" fill="none" stroke="#f8e600" stroke-width="1"/><line x1="173" y1="487.8" x2="153.8" y2="497.7" stroke="#f8e600" stroke-width="1"/><line x1="178" y1="487.8" x2="153.8" y2="500.0" stroke="#f8e600" stroke-width="1"/><line x1="150.5" y1="484.8" x2="153.8" y2="487.8" stroke="#f8e600" stroke-width="1"/></g><line x1="145.4" y1="202.5" x2="659" y2="202.5" stroke="#e8e8e8" stroke-width="1"/><polygon points="145.4,202.5 151.4,200.7 151.4,204.3" fill="#e8e8e8"/><polygon points="659.0,202.5 653.0,200.7 653.0,204.3" fill="#e8e8e8"/><line x1="145.5" y1="200" x2="145.5" y2="234" stroke="#e8e8e8" stroke-width="1"/><line x1="659.5" y1="200" x2="659.5" y2="234" stroke="#e8e8e8" stroke-width="1"/><text transform="translate(395.0,199) scale(0.78,1)" text-anchor="middle" font-size="19" fill="#f0f0f0" stroke="#f0f0f0" stroke-width="0.35">L</text><text transform="translate(409.7,199) scale(0.78,1)" text-anchor="middle" font-size="19" fill="#f0f0f0" stroke="#f0f0f0" stroke-width="0.35">1</text><line x1="127" y1="224.5" x2="643.5" y2="224.5" stroke="#e8e8e8" stroke-width="1"/><line x1="140.5" y1="224" x2="140.5" y2="234" stroke="#e8e8e8" stroke-width="1"/><line x1="145.5" y1="224" x2="145.5" y2="234" stroke="#e8e8e8" stroke-width="1"/><line x1="150.5" y1="224" x2="150.5" y2="234" stroke="#e8e8e8" stroke-width="1"/><line x1="162" y1="224" x2="162" y2="262" stroke="#a0a0a0" stroke-width="2"/><line x1="260.5" y1="224" x2="260.5" y2="270" stroke="#e8e8e8" stroke-width="1"/><line x1="355.5" y1="224" x2="355.5" y2="270" stroke="#e8e8e8" stroke-width="1"/><line x1="450.5" y1="224" x2="450.5" y2="270" stroke="#e8e8e8" stroke-width="1"/><line x1="544.5" y1="224" x2="544.5" y2="270" stroke="#e8e8e8" stroke-width="1"/><line x1="643.5" y1="224" x2="643.5" y2="262" stroke="#e8e8e8" stroke-width="1"/><polygon points="140.3,224.5 134.3,222.7 134.3,226.3" fill="#e8e8e8"/><polygon points="150.6,224.5 156.6,222.7 156.6,226.3" fill="#e8e8e8"/><polygon points="162.0,224.5 168.0,222.7 168.0,226.3" fill="#e8e8e8"/><polygon points="260.5,224.5 255.5,222.7 255.5,226.3" fill="#e8e8e8"/><polygon points="260.5,224.5 265.5,222.7 265.5,226.3" fill="#e8e8e8"/><polygon points="355.5,224.5 350.5,222.7 350.5,226.3" fill="#e8e8e8"/><polygon points="355.5,224.5 360.5,222.7 360.5,226.3" fill="#e8e8e8"/><polygon points="450.0,224.5 445.0,222.7 445.0,226.3" fill="#e8e8e8"/><polygon points="450.0,224.5 455.0,222.7 455.0,226.3" fill="#e8e8e8"/><polygon points="544.5,224.5 539.5,222.7 539.5,226.3" fill="#e8e8e8"/><polygon points="544.5,224.5 549.5,222.7 549.5,226.3" fill="#e8e8e8"/><polygon points="643.5,224.5 637.5,222.7 637.5,226.3" fill="#e8e8e8"/><text transform="translate(130.3,217) scale(0.75,1)" text-anchor="middle" font-size="19" fill="#f0f0f0" stroke="#f0f0f0" stroke-width="0.35">K</text><line x1="137.6" y1="218.5" x2="151.9" y2="218.5" stroke="#e8e8e8" stroke-width="1"/><text transform="translate(159.0,217) scale(0.75,1)" text-anchor="middle" font-size="19" fill="#f0f0f0" stroke="#f0f0f0" stroke-width="0.35">A</text><text transform="translate(183.9,219.6) scale(0.78,1)" text-anchor="middle" font-size="18" fill="#f0f0f0" stroke="#f0f0f0" stroke-width="0.35">a</text><text transform="translate(198.3,219.6) scale(0.78,1)" text-anchor="middle" font-size="18" fill="#f0f0f0" stroke="#f0f0f0" stroke-width="0.35">1</text><text transform="translate(222.1,219.6) scale(0.78,1)" text-anchor="middle" font-size="18" fill="#f0f0f0" stroke="#f0f0f0" stroke-width="0.35">n</text><text transform="translate(236.4,219.6) scale(0.78,1)" text-anchor="middle" font-size="18" fill="#f0f0f0" stroke="#f0f0f0" stroke-width="0.35">1</text><text transform="translate(207.7,217.3) scale(0.78,1)" text-anchor="middle" font-size="16.5" fill="#f0f0f0" stroke="#f0f0f0" stroke-width="0.35">@</text><text transform="translate(277.0,219.6) scale(0.78,1)" text-anchor="middle" font-size="18" fill="#f0f0f0" stroke="#f0f0f0" stroke-width="0.35">a</text><text transform="translate(291.8,219.6) scale(0.78,1)" text-anchor="middle" font-size="18" fill="#f0f0f0" stroke="#f0f0f0" stroke-width="0.35">2</text><text transform="translate(320.6,219.6) scale(0.78,1)" text-anchor="middle" font-size="18" fill="#f0f0f0" stroke="#f0f0f0" stroke-width="0.35">n</text><text transform="translate(335.4,219.6) scale(0.78,1)" text-anchor="middle" font-size="18" fill="#f0f0f0" stroke="#f0f0f0" stroke-width="0.35">2</text><text transform="translate(305.8,217.3) scale(0.78,1)" text-anchor="middle" font-size="16.5" fill="#f0f0f0" stroke="#f0f0f0" stroke-width="0.35">@</text><text transform="translate(372.5,219.6) scale(0.78,1)" text-anchor="middle" font-size="18" fill="#f0f0f0" stroke="#f0f0f0" stroke-width="0.35">a</text><text transform="translate(387.3,219.6) scale(0.78,1)" text-anchor="middle" font-size="18" fill="#f0f0f0" stroke="#f0f0f0" stroke-width="0.35">3</text><text transform="translate(416.1,219.6) scale(0.78,1)" text-anchor="middle" font-size="18" fill="#f0f0f0" stroke="#f0f0f0" stroke-width="0.35">n</text><text transform="translate(430.9,219.6) scale(0.78,1)" text-anchor="middle" font-size="18" fill="#f0f0f0" stroke="#f0f0f0" stroke-width="0.35">3</text><text transform="translate(401.3,217.3) scale(0.78,1)" text-anchor="middle" font-size="16.5" fill="#f0f0f0" stroke="#f0f0f0" stroke-width="0.35">@</text><text transform="translate(467.0,219.6) scale(0.78,1)" text-anchor="middle" font-size="18" fill="#f0f0f0" stroke="#f0f0f0" stroke-width="0.35">a</text><text transform="translate(481.8,219.6) scale(0.78,1)" text-anchor="middle" font-size="18" fill="#f0f0f0" stroke="#f0f0f0" stroke-width="0.35">4</text><text transform="translate(510.6,219.6) scale(0.78,1)" text-anchor="middle" font-size="18" fill="#f0f0f0" stroke="#f0f0f0" stroke-width="0.35">n</text><text transform="translate(525.4,219.6) scale(0.78,1)" text-anchor="middle" font-size="18" fill="#f0f0f0" stroke="#f0f0f0" stroke-width="0.35">4</text><text transform="translate(495.8,217.3) scale(0.78,1)" text-anchor="middle" font-size="16.5" fill="#f0f0f0" stroke="#f0f0f0" stroke-width="0.35">@</text><text transform="translate(563.0,219.6) scale(0.78,1)" text-anchor="middle" font-size="18" fill="#f0f0f0" stroke="#f0f0f0" stroke-width="0.35">a</text><text transform="translate(577.8,219.6) scale(0.78,1)" text-anchor="middle" font-size="18" fill="#f0f0f0" stroke="#f0f0f0" stroke-width="0.35">5</text><text transform="translate(606.6,219.6) scale(0.78,1)" text-anchor="middle" font-size="18" fill="#f0f0f0" stroke="#f0f0f0" stroke-width="0.35">n</text><text transform="translate(621.4,219.6) scale(0.78,1)" text-anchor="middle" font-size="18" fill="#f0f0f0" stroke="#f0f0f0" stroke-width="0.35">5</text><text transform="translate(591.8,217.3) scale(0.78,1)" text-anchor="middle" font-size="16.5" fill="#f0f0f0" stroke="#f0f0f0" stroke-width="0.35">@</text><line x1="118.5" y1="237" x2="118.5" y2="647.5" stroke="#e8e8e8" stroke-width="1"/><polygon points="118.5,237.0 116.7,243.0 120.3,243.0" fill="#e8e8e8"/><polygon points="118.5,647.5 116.7,641.5 120.3,641.5" fill="#e8e8e8"/><line x1="116.5" y1="236.5" x2="138" y2="236.5" stroke="#e8e8e8" stroke-width="1"/><line x1="116.5" y1="647.5" x2="138" y2="647.5" stroke="#e8e8e8" stroke-width="1"/><text transform="translate(82.0,447.6) scale(0.75,1)" text-anchor="middle" font-size="19" fill="#f0f0f0" stroke="#f0f0f0" stroke-width="0.35">K</text><line x1="90" y1="448.8" x2="104" y2="448.8" stroke="#e8e8e8" stroke-width="1.4"/><text transform="translate(111.5,447.6) scale(0.75,1)" text-anchor="middle" font-size="19" fill="#f0f0f0" stroke="#f0f0f0" stroke-width="0.35">L</text><line x1="667" y1="236.5" x2="717" y2="236.5" stroke="#e8e8e8" stroke-width="1"/><line x1="686.5" y1="236.5" x2="686.5" y2="477.5" stroke="#a0a0a0" stroke-width="2"/><line x1="652" y1="263.5" x2="686.5" y2="263.5" stroke="#e8e8e8" stroke-width="1"/><line x1="652" y1="317.5" x2="686.5" y2="317.5" stroke="#e8e8e8" stroke-width="1"/><line x1="652" y1="370.5" x2="686.5" y2="370.5" stroke="#e8e8e8" stroke-width="1"/><line x1="652" y1="424.5" x2="686.5" y2="424.5" stroke="#e8e8e8" stroke-width="1"/><line x1="652" y1="477.5" x2="686.5" y2="477.5" stroke="#e8e8e8" stroke-width="1"/><polygon points="686.5,236.5 684.7,241.5 688.3,241.5" fill="#e8e8e8"/><polygon points="686.5,263.5 684.7,268.5 688.3,268.5" fill="#e8e8e8"/><polygon points="686.5,317.5 684.7,322.5 688.3,322.5" fill="#e8e8e8"/><polygon points="686.5,370.5 684.7,375.5 688.3,375.5" fill="#e8e8e8"/><polygon points="686.5,424.5 684.7,429.5 688.3,429.5" fill="#e8e8e8"/><polygon points="686.5,263.5 684.7,258.5 688.3,258.5" fill="#e8e8e8"/><polygon points="686.5,317.5 684.7,312.5 688.3,312.5" fill="#e8e8e8"/><polygon points="686.5,370.5 684.7,365.5 688.3,365.5" fill="#e8e8e8"/><polygon points="686.5,424.5 684.7,419.5 688.3,419.5" fill="#e8e8e8"/><polygon points="686.5,477.5 684.7,472.5 688.3,472.5" fill="#e8e8e8"/><line x1="715.5" y1="236.5" x2="715.5" y2="279.5" stroke="#e8e8e8" stroke-width="1"/><polygon points="715.6,236.5 713.8,242.5 717.4,242.5" fill="#e8e8e8"/><polygon points="715.6,279.5 713.8,273.5 717.4,273.5" fill="#e8e8e8"/><line x1="546" y1="279.5" x2="716" y2="279.5" stroke="#e8e8e8" stroke-width="1"/><text transform="translate(696.0,258.6) scale(0.78,1)" text-anchor="middle" font-size="19" fill="#f0f0f0" stroke="#f0f0f0" stroke-width="0.35">T</text><text transform="translate(710.5,258.6) scale(0.78,1)" text-anchor="middle" font-size="19" fill="#f0f0f0" stroke="#f0f0f0" stroke-width="0.35">1</text><text transform="translate(726.0,268.7) scale(0.78,1)" text-anchor="middle" font-size="19" fill="#f0f0f0" stroke="#f0f0f0" stroke-width="0.35">T</text><text transform="translate(740.0,268.7) scale(0.78,1)" text-anchor="middle" font-size="19" fill="#f0f0f0" stroke="#f0f0f0" stroke-width="0.35">2</text><text transform="translate(693.8,300.8) scale(0.78,1)" text-anchor="middle" font-size="19" fill="#f0f0f0" stroke="#f0f0f0" stroke-width="0.35">h</text><text transform="translate(708.0,300.8) scale(0.78,1)" text-anchor="middle" font-size="19" fill="#f0f0f0" stroke="#f0f0f0" stroke-width="0.35">1</text><text transform="translate(693.8,352.5) scale(0.78,1)" text-anchor="middle" font-size="19" fill="#f0f0f0" stroke="#f0f0f0" stroke-width="0.35">h</text><text transform="translate(708.0,352.5) scale(0.78,1)" text-anchor="middle" font-size="19" fill="#f0f0f0" stroke="#f0f0f0" stroke-width="0.35">2</text><text transform="translate(693.8,405.4) scale(0.78,1)" text-anchor="middle" font-size="19" fill="#f0f0f0" stroke="#f0f0f0" stroke-width="0.35">h</text><text transform="translate(708.0,405.4) scale(0.78,1)" text-anchor="middle" font-size="19" fill="#f0f0f0" stroke="#f0f0f0" stroke-width="0.35">3</text><text transform="translate(693.8,454.3) scale(0.78,1)" text-anchor="middle" font-size="19" fill="#f0f0f0" stroke="#f0f0f0" stroke-width="0.35">h</text><text transform="translate(708.0,454.3) scale(0.78,1)" text-anchor="middle" font-size="19" fill="#f0f0f0" stroke="#f0f0f0" stroke-width="0.35">4</text><polyline points="162.5,478 180.6,532.7 313.8,532.7" fill="none" stroke="#e8e8e8" stroke-width="1"/><polyline points="163,494 180,562.8 262,562.8" fill="none" stroke="#e8e8e8" stroke-width="1"/><polyline points="376.5,479.7 396.3,533 529,533" fill="none" stroke="#e8e8e8" stroke-width="1"/><polyline points="355,493.7 396.3,563.5 529,563.5" fill="none" stroke="#e8e8e8" stroke-width="1"/><text transform="translate(196.0,528.2) scale(0.7,1)" text-anchor="middle" font-size="15.5" fill="#f0f0f0" stroke="#f0f0f0" stroke-width="0.35">H</text><text transform="translate(206.0,528.2) scale(0.7,1)" text-anchor="middle" font-size="15.5" fill="#f0f0f0" stroke="#f0f0f0" stroke-width="0.35">a</text><text transform="translate(216.0,528.2) scale(0.7,1)" text-anchor="middle" font-size="15.5" fill="#f0f0f0" stroke="#f0f0f0" stroke-width="0.35">−</text><text transform="translate(226.0,528.2) scale(0.7,1)" text-anchor="middle" font-size="15.5" fill="#f0f0f0" stroke="#f0f0f0" stroke-width="0.35">A</text><text transform="translate(236.0,528.2) scale(0.7,1)" text-anchor="middle" font-size="15.5" fill="#f0f0f0" stroke="#f0f0f0" stroke-width="0.35">×</text><text transform="translate(246.0,528.2) scale(0.7,1)" text-anchor="middle" font-size="15.5" fill="#f0f0f0" stroke="#f0f0f0" stroke-width="0.35">B</text><text transform="translate(256.0,528.2) scale(0.7,1)" text-anchor="middle" font-size="15.5" fill="#f0f0f0" stroke="#f0f0f0" stroke-width="0.35">×</text><text transform="translate(266.0,528.2) scale(0.7,1)" text-anchor="middle" font-size="15.5" fill="#f0f0f0" stroke="#f0f0f0" stroke-width="0.35">t</text><text transform="translate(276.0,528.2) scale(0.7,1)" text-anchor="middle" font-size="15.5" fill="#f0f0f0" stroke="#f0f0f0" stroke-width="0.35">1</text><text transform="translate(286.0,528.2) scale(0.7,1)" text-anchor="middle" font-size="15.5" fill="#f0f0f0" stroke="#f0f0f0" stroke-width="0.35">×</text><text transform="translate(296.0,528.2) scale(0.7,1)" text-anchor="middle" font-size="15.5" fill="#f0f0f0" stroke="#f0f0f0" stroke-width="0.35">t</text><text transform="translate(306.0,528.2) scale(0.7,1)" text-anchor="middle" font-size="15.5" fill="#f0f0f0" stroke="#f0f0f0" stroke-width="0.35">2</text><text transform="translate(196.4,559) scale(0.7,1)" text-anchor="middle" font-size="15.5" fill="#f0f0f0" stroke="#f0f0f0" stroke-width="0.35">B</text><text transform="translate(206.3,559) scale(0.7,1)" text-anchor="middle" font-size="15.5" fill="#f0f0f0" stroke="#f0f0f0" stroke-width="0.35">−</text><text transform="translate(216.1,559) scale(0.7,1)" text-anchor="middle" font-size="15.5" fill="#f0f0f0" stroke="#f0f0f0" stroke-width="0.35">A</text><text transform="translate(226.0,559) scale(0.7,1)" text-anchor="middle" font-size="15.5" fill="#f0f0f0" stroke="#f0f0f0" stroke-width="0.35">×</text><text transform="translate(235.9,559) scale(0.7,1)" text-anchor="middle" font-size="15.5" fill="#f0f0f0" stroke="#f0f0f0" stroke-width="0.35">B</text><text transform="translate(245.7,559) scale(0.7,1)" text-anchor="middle" font-size="15.5" fill="#f0f0f0" stroke="#f0f0f0" stroke-width="0.35">×</text><text transform="translate(255.6,559) scale(0.7,1)" text-anchor="middle" font-size="15.5" fill="#f0f0f0" stroke="#f0f0f0" stroke-width="0.35">C</text><text transform="translate(413.0,528) scale(0.7,1)" text-anchor="middle" font-size="15.5" fill="#f0f0f0" stroke="#f0f0f0" stroke-width="0.35">K</text><text transform="translate(422.9,528) scale(0.7,1)" text-anchor="middle" font-size="15.5" fill="#f0f0f0" stroke="#f0f0f0" stroke-width="0.35">a</text><text transform="translate(432.9,528) scale(0.7,1)" text-anchor="middle" font-size="15.5" fill="#f0f0f0" stroke="#f0f0f0" stroke-width="0.35">−</text><text transform="translate(442.9,528) scale(0.7,1)" text-anchor="middle" font-size="15.5" fill="#f0f0f0" stroke="#f0f0f0" stroke-width="0.35">A</text><text transform="translate(452.8,528) scale(0.7,1)" text-anchor="middle" font-size="15.5" fill="#f0f0f0" stroke="#f0f0f0" stroke-width="0.35">×</text><text transform="translate(462.8,528) scale(0.7,1)" text-anchor="middle" font-size="15.5" fill="#f0f0f0" stroke="#f0f0f0" stroke-width="0.35">B</text><text transform="translate(472.7,528) scale(0.7,1)" text-anchor="middle" font-size="15.5" fill="#f0f0f0" stroke="#f0f0f0" stroke-width="0.35">×</text><text transform="translate(482.7,528) scale(0.7,1)" text-anchor="middle" font-size="15.5" fill="#f0f0f0" stroke="#f0f0f0" stroke-width="0.35">t</text><text transform="translate(492.6,528) scale(0.7,1)" text-anchor="middle" font-size="15.5" fill="#f0f0f0" stroke="#f0f0f0" stroke-width="0.35">1</text><text transform="translate(502.6,528) scale(0.7,1)" text-anchor="middle" font-size="15.5" fill="#f0f0f0" stroke="#f0f0f0" stroke-width="0.35">×</text><text transform="translate(512.6,528) scale(0.7,1)" text-anchor="middle" font-size="15.5" fill="#f0f0f0" stroke="#f0f0f0" stroke-width="0.35">t</text><text transform="translate(522.5,528) scale(0.7,1)" text-anchor="middle" font-size="15.5" fill="#f0f0f0" stroke="#f0f0f0" stroke-width="0.35">2</text><text transform="translate(413.0,559.2) scale(0.7,1)" text-anchor="middle" font-size="15.5" fill="#f0f0f0" stroke="#f0f0f0" stroke-width="0.35">K</text><text transform="translate(422.9,559.2) scale(0.7,1)" text-anchor="middle" font-size="15.5" fill="#f0f0f0" stroke="#f0f0f0" stroke-width="0.35">b</text><text transform="translate(432.9,559.2) scale(0.7,1)" text-anchor="middle" font-size="15.5" fill="#f0f0f0" stroke="#f0f0f0" stroke-width="0.35">−</text><text transform="translate(442.9,559.2) scale(0.7,1)" text-anchor="middle" font-size="15.5" fill="#f0f0f0" stroke="#f0f0f0" stroke-width="0.35">A</text><text transform="translate(452.8,559.2) scale(0.7,1)" text-anchor="middle" font-size="15.5" fill="#f0f0f0" stroke="#f0f0f0" stroke-width="0.35">×</text><text transform="translate(462.8,559.2) scale(0.7,1)" text-anchor="middle" font-size="15.5" fill="#f0f0f0" stroke="#f0f0f0" stroke-width="0.35">B</text><text transform="translate(472.7,559.2) scale(0.7,1)" text-anchor="middle" font-size="15.5" fill="#f0f0f0" stroke="#f0f0f0" stroke-width="0.35">×</text><text transform="translate(482.7,559.2) scale(0.7,1)" text-anchor="middle" font-size="15.5" fill="#f0f0f0" stroke="#f0f0f0" stroke-width="0.35">t</text><text transform="translate(492.6,559.2) scale(0.7,1)" text-anchor="middle" font-size="15.5" fill="#f0f0f0" stroke="#f0f0f0" stroke-width="0.35">1</text><text transform="translate(502.6,559.2) scale(0.7,1)" text-anchor="middle" font-size="15.5" fill="#f0f0f0" stroke="#f0f0f0" stroke-width="0.35">×</text><text transform="translate(512.6,559.2) scale(0.7,1)" text-anchor="middle" font-size="15.5" fill="#f0f0f0" stroke="#f0f0f0" stroke-width="0.35">t</text><text transform="translate(522.5,559.2) scale(0.7,1)" text-anchor="middle" font-size="15.5" fill="#f0f0f0" stroke="#f0f0f0" stroke-width="0.35">2</text><polygon points="262.9,584.5 366.9,584.5 366.9,594.1 273.6,594.1 273.6,645.4 262.9,645.4" fill="none" stroke="#f8e600" stroke-width="1"/><line x1="262.9" y1="584.5" x2="273.6" y2="594.1" stroke="#f8e600" stroke-width="1"/><line x1="334" y1="594.1" x2="273.6" y2="624.9" stroke="#f8e600" stroke-width="1"/><line x1="345.4" y1="594.1" x2="273.6" y2="631.4" stroke="#f8e600" stroke-width="1"/><line x1="262.9" y1="574.5" x2="366.9" y2="574.5" stroke="#e8e8e8" stroke-width="1"/><polygon points="262.9,574.5 268.9,572.7 268.9,576.3" fill="#e8e8e8"/><polygon points="366.9,574.5 360.9,572.7 360.9,576.3" fill="#e8e8e8"/><line x1="262.5" y1="572" x2="262.5" y2="584" stroke="#e8e8e8" stroke-width="1"/><line x1="366.5" y1="572" x2="366.5" y2="584" stroke="#e8e8e8" stroke-width="1"/><text transform="translate(305.0,570.5) scale(0.75,1)" text-anchor="middle" font-size="15.5" fill="#f0f0f0" stroke="#f0f0f0" stroke-width="0.35">B</text><line x1="309" y1="571.5" x2="318" y2="571.5" stroke="#e8e8e8" stroke-width="1"/><text transform="translate(322.0,570.5) scale(0.75,1)" text-anchor="middle" font-size="15.5" fill="#f0f0f0" stroke="#f0f0f0" stroke-width="0.35">B</text><line x1="252.5" y1="584.5" x2="252.5" y2="645.4" stroke="#e8e8e8" stroke-width="1"/><polygon points="252.5,584.5 250.7,590.5 254.3,590.5" fill="#e8e8e8"/><polygon points="252.5,645.4 250.7,639.4 254.3,639.4" fill="#e8e8e8"/><line x1="248" y1="584.5" x2="262" y2="584.5" stroke="#e8e8e8" stroke-width="1"/><line x1="248" y1="645.5" x2="262" y2="645.5" stroke="#e8e8e8" stroke-width="1"/><text transform="translate(227.0,618.7) scale(0.75,1)" text-anchor="middle" font-size="15.5" fill="#f0f0f0" stroke="#f0f0f0" stroke-width="0.35">B</text><line x1="231" y1="619.5" x2="240" y2="619.5" stroke="#e8e8e8" stroke-width="1"/><text transform="translate(244.0,618.7) scale(0.75,1)" text-anchor="middle" font-size="15.5" fill="#f0f0f0" stroke="#f0f0f0" stroke-width="0.35">A</text><line x1="375.5" y1="572.6" x2="375.5" y2="606.4" stroke="#e8e8e8" stroke-width="1"/><polygon points="375.7,584.5 373.9,579.5 377.5,579.5" fill="#e8e8e8"/><polygon points="375.7,594.1 373.9,599.1 377.5,599.1" fill="#e8e8e8"/><line x1="367" y1="584.5" x2="380" y2="584.5" stroke="#e8e8e8" stroke-width="1"/><line x1="367" y1="594.5" x2="380" y2="594.5" stroke="#e8e8e8" stroke-width="1"/><text transform="translate(385.0,594.7) scale(0.75,1)" text-anchor="middle" font-size="15.5" fill="#f0f0f0" stroke="#f0f0f0" stroke-width="0.35">B</text><line x1="389" y1="595.5" x2="398" y2="595.5" stroke="#e8e8e8" stroke-width="1"/><text transform="translate(402.0,594.7) scale(0.75,1)" text-anchor="middle" font-size="15.5" fill="#f0f0f0" stroke="#f0f0f0" stroke-width="0.35">C</text><line x1="345.4" y1="605.5" x2="366.9" y2="605.5" stroke="#e8e8e8" stroke-width="1"/><polygon points="345.4,605.0 350.4,603.2 350.4,606.8" fill="#e8e8e8"/><polygon points="366.9,605.0 361.9,603.2 361.9,606.8" fill="#e8e8e8"/><line x1="345.5" y1="594" x2="345.5" y2="606" stroke="#e8e8e8" stroke-width="1"/><line x1="366.5" y1="594" x2="366.5" y2="606" stroke="#e8e8e8" stroke-width="1"/><text transform="translate(347.0,619.7) scale(0.75,1)" text-anchor="middle" font-size="15.5" fill="#f0f0f0" stroke="#f0f0f0" stroke-width="0.35">B</text><line x1="351" y1="620.5" x2="360" y2="620.5" stroke="#e8e8e8" stroke-width="1"/><text transform="translate(364.0,619.7) scale(0.75,1)" text-anchor="middle" font-size="15.5" fill="#f0f0f0" stroke="#f0f0f0" stroke-width="0.35">D</text></g><text x="339.5" y="675.5" font-family="Liberation Serif, serif" font-size="16" fill="#f0f0f0" textLength="286" lengthAdjust="spacingAndGlyphs">※Ｔ１，ｈ１～ｈ４は、腹起材(Ha_B)の中心</text><text x="339.5" y="698.5" font-family="Liberation Serif, serif" font-size="16" fill="#f0f0f0" textLength="200" lengthAdjust="spacingAndGlyphs">※Ｔ２は、切梁材(Kb_A)の中心</text></svg><script>document.querySelectorAll(".fit").forEach(function(e){var w=parseFloat(getComputedStyle(e).getPropertyValue("--w"));var n=e.scrollWidth;if(w&&n)e.style.transform="scaleX("+(w/n)+")";});</script></body></html>
